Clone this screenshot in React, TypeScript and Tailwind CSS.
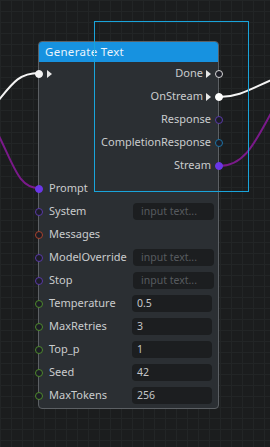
import React from 'react';

type PinKind = 'hollow' | 'filled';

interface PinProps {
  color: string;
  kind: PinKind;
  side: 'left' | 'right';
}

const Pin: React.FC<PinProps> = ({ color, kind, side }) => (
  <span
    className={`absolute top-1/2 -translate-y-1/2 w-[8px] h-[8px] rounded-full border-[1.5px] ${
      side === 'left' ? 'left-[-4.5px]' : 'right-[-4.5px]'
    }`}
    style={{ borderColor: color, backgroundColor: kind === 'filled' ? color : '#1c1d26' }}
  />
);

const Tri = () => (
  <svg width="5" height="8" viewBox="0 0 5 8" className="shrink-0">
    <path d="M0 0 L5 4 L0 8 Z" fill="#e8e8e8" />
  </svg>
);

const outputs = [
  { label: 'Done', exec: true, color: '#d8d8d8', kind: 'hollow' as PinKind },
  { label: 'OnStream', exec: true, color: '#ffffff', kind: 'filled' as PinKind },
  { label: 'Response', exec: false, color: '#5a3aa8', kind: 'hollow' as PinKind },
  { label: 'CompletionResponse', exec: false, color: '#1c74a6', kind: 'hollow' as PinKind },
  { label: 'Stream', exec: false, color: '#6a36e6', kind: 'filled' as PinKind },
];

const inputs: { label: string; color: string; kind: PinKind; input?: string; value?: string }[] = [
  { label: 'Prompt', color: '#6a36e6', kind: 'filled' },
  { label: 'System', color: '#5a3aa8', kind: 'hollow', input: 'input text...' },
  { label: 'Messages', color: '#a8432c', kind: 'hollow' },
  { label: 'ModelOverride', color: '#5a3aa8', kind: 'hollow', input: 'input text...' },
  { label: 'Stop', color: '#5a3aa8', kind: 'hollow', input: 'input text...' },
  { label: 'Temperature', color: '#4e8a2c', kind: 'hollow', value: '0.5' },
  { label: 'MaxRetries', color: '#4e8a2c', kind: 'hollow', value: '3' },
  { label: 'Top_p', color: '#4e8a2c', kind: 'hollow', value: '1' },
  { label: 'Seed', color: '#4e8a2c', kind: 'hollow', value: '42' },
  { label: 'MaxTokens', color: '#4e8a2c', kind: 'hollow', value: '256' },
];

export default function App() {
  return (
    <div
      className="relative w-[270px] h-[447px] overflow-hidden bg-[#1b1d1e] bg-[linear-gradient(#222526_1px,transparent_1px),linear-gradient(90deg,#222526_1px,transparent_1px)] bg-[size:11px_11px]"
      style={{ fontFamily: '"Noto Sans", "Open Sans", sans-serif' }}
    >
      {/* wires */}
      <svg className="absolute inset-0" width="270" height="447">
        <path d="M39 73 C18 73 12 84 -6 106" stroke="#f4f4f4" strokeWidth="2" fill="none" />
        <path d="M219 97 C240 97 252 88 276 78" stroke="#f4f4f4" strokeWidth="2" fill="none" />
        <path d="M39 188 C18 188 14 165 -4 130" stroke="#7a1a8a" strokeWidth="2" fill="none" />
        <path d="M219 166 C246 166 256 140 276 104" stroke="#7a1a8a" strokeWidth="2" fill="none" />
      </svg>

      {/* node */}
      <div className="absolute left-[38px] top-[41px] w-[181px] rounded-[4px] border border-[#5c6064] bg-[#2b2f33] text-[11px] text-[#caccce]">
        <div className="h-[20px] rounded-t-[3px] bg-[#1792e0] pl-[6px] flex items-center text-[#eaf4fc] text-[11.5px] tracking-[0.3px]">
          Generate Text
        </div>
        <div className="flex flex-col pb-[1px]">
          {outputs.map((o, i) => (
            <div key={o.label} className="relative h-[23px] flex items-center">
              {i === 0 && (
                <>
                  <Pin side="left" color="#f4f4f4" kind="filled" />
                  <span className="ml-[8px]">
                    <Tri />
                  </span>
                </>
              )}
              <div className="ml-auto mr-[7px] flex items-center gap-[3px]">
                <span>{o.label}</span>
                {o.exec && <Tri />}
              </div>
              <Pin side="right" color={o.color} kind={o.kind} />
            </div>
          ))}
          {inputs.map((r) => (
            <div key={r.label} className="relative h-[23px] flex items-center pl-[10px] pr-[4px]">
              <Pin side="left" color={r.color} kind={r.kind} />
              <span className="flex-1">{r.label}</span>
              {r.input && (
                <div className="w-[81px] h-[17px] rounded-[4px] bg-[#1c1e20] px-[8px] flex items-center text-[10.5px] text-[#575b5f]">
                  {r.input}
                </div>
              )}
              {r.value && (
                <div className="w-[80px] mr-[2px] h-[17px] rounded-[4px] bg-[#1c1e20] px-[5px] flex items-center text-[10.5px] text-[#c4c6c8]">
                  {r.value}
                </div>
              )}
            </div>
          ))}
        </div>
      </div>

      {/* selection box */}
      <div className="absolute left-[94px] top-[21px] w-[155px] h-[171px] border border-[#19a4da]" />
    </div>
  );
}
